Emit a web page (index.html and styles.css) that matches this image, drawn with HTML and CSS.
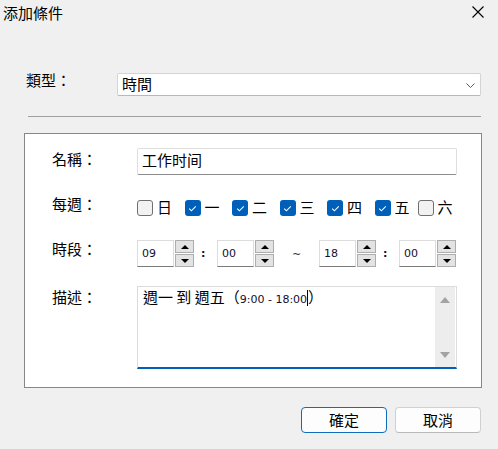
FILE: index.html
```html
<!DOCTYPE html>
<html lang="zh-Hant">
<head>
<meta charset="utf-8">
<title>添加條件</title>
<link rel="stylesheet" href="styles.css">
</head>
<body>
<div class="window">
  <div class="titlebar">
    <span class="title">添加條件</span>
    <svg class="close" width="12" height="12" viewBox="0 0 12 12"><path d="M0.5 0.5 L11.5 11.5 M11.5 0.5 L0.5 11.5" stroke="#000" stroke-width="1.1" fill="none"/></svg>
  </div>

  <div class="type-row">
    <span class="label">類型：</span>
    <div class="combo">
      <span class="combo-text">時間</span>
      <svg class="chevron" width="9" height="5" viewBox="0 0 9 5"><path d="M0.5 0.5 L4.5 4.5 L8.5 0.5" stroke="#5a5a5a" stroke-width="1" fill="none"/></svg>
    </div>
  </div>

  <div class="separator"></div>

  <div class="panel">
    <div class="row row-name">
      <span class="label">名稱：</span>
      <div class="textbox">工作时间</div>
    </div>

    <div class="row row-week">
      <span class="label">每週：</span>
      <div class="days">
        <label class="day"><span class="box"></span><span class="day-text">日</span></label>
        <label class="day"><span class="box checked"><svg width="15" height="15" viewBox="0 0 15 15"><path d="M4.2 7.6 L6.4 9.8 L10.8 5.4" stroke="#fff" stroke-width="1.1" fill="none"/></svg></span><span class="day-text">一</span></label>
        <label class="day"><span class="box checked"><svg width="15" height="15" viewBox="0 0 15 15"><path d="M4.2 7.6 L6.4 9.8 L10.8 5.4" stroke="#fff" stroke-width="1.1" fill="none"/></svg></span><span class="day-text">二</span></label>
        <label class="day"><span class="box checked"><svg width="15" height="15" viewBox="0 0 15 15"><path d="M4.2 7.6 L6.4 9.8 L10.8 5.4" stroke="#fff" stroke-width="1.1" fill="none"/></svg></span><span class="day-text">三</span></label>
        <label class="day"><span class="box checked"><svg width="15" height="15" viewBox="0 0 15 15"><path d="M4.2 7.6 L6.4 9.8 L10.8 5.4" stroke="#fff" stroke-width="1.1" fill="none"/></svg></span><span class="day-text">四</span></label>
        <label class="day day-narrow"><span class="box checked"><svg width="15" height="15" viewBox="0 0 15 15"><path d="M4.2 7.6 L6.4 9.8 L10.8 5.4" stroke="#fff" stroke-width="1.1" fill="none"/></svg></span><span class="day-text">五</span></label>
        <label class="day"><span class="box"></span><span class="day-text">六</span></label>
      </div>
    </div>

    <div class="row row-time">
      <span class="label">時段：</span>
      <div class="times">
        <div class="spin"><div class="spin-input">09</div><div class="spin-btns"><span class="spin-btn"><i class="tri-up"></i></span><span class="spin-btn"><i class="tri-down"></i></span></div></div>
        <span class="sep colon">:</span>
        <div class="spin"><div class="spin-input">00</div><div class="spin-btns"><span class="spin-btn"><i class="tri-up"></i></span><span class="spin-btn"><i class="tri-down"></i></span></div></div>
        <span class="sep tilde">~</span>
        <div class="spin"><div class="spin-input">18</div><div class="spin-btns"><span class="spin-btn"><i class="tri-up"></i></span><span class="spin-btn"><i class="tri-down"></i></span></div></div>
        <span class="sep colon">:</span>
        <div class="spin"><div class="spin-input">00</div><div class="spin-btns"><span class="spin-btn"><i class="tri-up"></i></span><span class="spin-btn"><i class="tri-down"></i></span></div></div>
      </div>
    </div>

    <div class="row row-desc">
      <span class="label">描述：</span>
      <div class="memo">
        <div class="memo-text">週一 到 週五（<span class="num">9:00 - 18:00</span><span class="caret"></span>）</div>
        <div class="scrollbar">
          <i class="sb-up"></i>
          <i class="sb-down"></i>
        </div>
      </div>
    </div>
  </div>

  <div class="footer">
    <button class="btn primary">確定</button>
    <button class="btn">取消</button>
  </div>
</div>
</body>
</html>
```

FILE: styles.css
```css
html, body {
  margin: 0;
  padding: 0;
}
body {
  background: #f0f0f0;
  font-family: "Noto Sans CJK TC", "Noto Sans CJK SC", sans-serif;
  font-size: 15px;
  color: #000;
}
.window {
  width: 498px;
  height: 449px;
  overflow: hidden;
}

/* title bar */
.titlebar {
  display: flex;
  justify-content: space-between;
  align-items: flex-start;
  height: 25px;
  padding: 0 14px 0 3px;
}
.title {
  line-height: 25px;
}
.close {
  margin-top: 6px;
  display: block;
}

/* type row */
.type-row {
  display: flex;
  align-items: flex-start;
  margin-top: 48px;
  padding-left: 26px;
}
.type-row .label {
  width: 91px;
  line-height: 20px;
  margin-top: -3px;
}
.combo {
  box-sizing: border-box;
  width: 364px;
  height: 23px;
  background: #fff;
  border: 1px solid #d4d4d4;
  border-bottom-color: #b8b8b8;
  border-radius: 2px;
  display: flex;
  align-items: center;
  justify-content: space-between;
  padding: 0 5px 0 4px;
}
.combo-text {
  line-height: 20px;
  margin-top: -1px;
}
.chevron {
  display: block;
  margin-top: 2px;
}

.separator {
  margin: 20px 0 0 28px;
  width: 453px;
  height: 1px;
  background: #a0a0a0;
}

/* panel */
.panel {
  box-sizing: border-box;
  margin: 16px 0 0 24px;
  width: 458px;
  background: #fff;
  border: 1px solid #878787;
  padding: 14px 0 18px 27px;
}
.row {
  display: grid;
  grid-template-columns: 85px auto;
  align-items: start;
}
.row .label {
  line-height: 20px;
}
.row-name .label { margin-top: 1px; }
.row-week { margin-top: 22px; }
.row-week .label { margin-top: -3px; }
.row-time { margin-top: 21px; }
.row-time .label { margin-top: -1px; }
.row-desc { margin-top: 19px; }
.row-desc .label { margin-top: 1px; }

.textbox {
  box-sizing: border-box;
  width: 320px;
  height: 27px;
  border: 1px solid #dedede;
  border-bottom-color: #8d8d8d;
  border-radius: 2px;
  padding: 0 4px;
  line-height: 22px;
}

/* week days */
.days {
  display: flex;
  align-items: center;
  height: 22px;
}
.day {
  display: flex;
  align-items: center;
  width: 47.5px;
}
.day-narrow {
  width: 43px;
}
.box {
  box-sizing: border-box;
  width: 16px;
  height: 16px;
  border: 1px solid #707070;
  border-radius: 3px;
  background: #f2f2f2;
  display: block;
}
.box.checked {
  border: none;
  background: #005fb8;
}
.box svg {
  display: block;
  margin: 0.5px;
}
.day-text {
  margin-left: 4px;
  line-height: 20px;
  margin-top: -2px;
}

/* time spinners */
.times {
  display: flex;
  align-items: center;
  height: 27px;
}
.spin {
  display: flex;
  width: 57px;
}
.spin-input {
  box-sizing: border-box;
  width: 37px;
  height: 27px;
  border: 1px solid #dcdcdc;
  border-bottom-color: #7a7a7a;
  padding-left: 4px;
  font-family: "DejaVu Sans", sans-serif;
  font-size: 11px;
  line-height: 25px;
  color: #101030;
}
.spin-btns {
  margin-left: 1px;
  width: 19px;
  display: flex;
  flex-direction: column;
  gap: 1px;
}
.spin-btn {
  box-sizing: border-box;
  height: 13px;
  border: 1px solid #adadad;
  background: #e3e3e3;
  display: flex;
  align-items: center;
  justify-content: center;
}
.tri-up, .tri-down {
  width: 0;
  height: 0;
  border-left: 4px solid transparent;
  border-right: 4px solid transparent;
}
.tri-up { border-bottom: 4px solid #000; }
.tri-down { border-top: 4px solid #000; }

.sep {
  display: block;
  line-height: 20px;
}
.colon {
  box-sizing: border-box;
  width: 23px;
  padding-left: 7px;
  font-family: "DejaVu Sans", sans-serif;
  font-size: 11px;
  font-weight: bold;
  color: #101030;
}
.tilde {
  width: 45px;
  text-align: center;
  font-family: "DejaVu Sans", sans-serif;
  font-size: 11px;
  color: #333;
  margin-top: 2px;
}

/* description memo */
.memo {
  box-sizing: border-box;
  width: 320px;
  height: 83px;
  border: 1px solid #dcdcdc;
  border-bottom: 2px solid #005fb8;
  display: flex;
  justify-content: space-between;
}
.memo-text {
  padding: 0 0 0 5px;
  line-height: 20px;
  white-space: nowrap;
}
.num {
  font-family: "DejaVu Sans", sans-serif;
  font-size: 11px;
  color: #101030;
}
.caret {
  display: inline-block;
  width: 1px;
  height: 16px;
  background: #000;
  vertical-align: -3px;
}
.scrollbar {
  width: 20px;
  margin-right: 1px;
  background: #ededed;
  display: flex;
  flex-direction: column;
  align-items: center;
  justify-content: space-between;
  padding: 10px 0 9px;
  box-sizing: border-box;
}
.sb-up, .sb-down {
  width: 0;
  height: 0;
  border-left: 5px solid transparent;
  border-right: 5px solid transparent;
}
.sb-up { border-bottom: 6px solid #a3a3a3; }
.sb-down { border-top: 6px solid #a3a3a3; }

/* footer */
.footer {
  display: flex;
  justify-content: flex-end;
  gap: 8px;
  margin-top: 19px;
  padding-right: 17px;
}
.btn {
  box-sizing: border-box;
  width: 86px;
  height: 26px;
  border: 1px solid #d0d0d0;
  border-bottom-color: #b9b9b9;
  border-radius: 4px;
  background: #fdfdfd;
  font-family: "Noto Sans CJK TC", sans-serif;
  font-size: 15px;
  color: #000;
  padding: 0;
  line-height: 22px;
}
.btn.primary {
  border: 1px solid #0f6cbd;
}
```
